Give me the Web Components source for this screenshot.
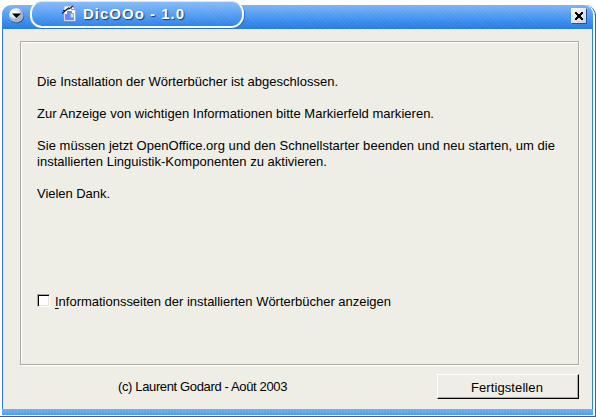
<!DOCTYPE html>
<html lang="de">
<head>
<meta charset="utf-8">
<title>DicOOo - 1.0</title>
<style>
html,body{margin:0;width:596px;height:417px;overflow:hidden;background:#fff}
body{font:13px/16px "Liberation Sans",Arial,sans-serif;color:#000}
</style>
</head>
<body>
<dialog-window>
  <title-bar slot="title"><fit-text span="102">DicOOo - 1.0</fit-text></title-bar>
  <group-frame>
    <fit-text span="301">Die Installation der Wörterbücher ist abgeschlossen.</fit-text>
    <fit-text span="397" class="gap">Zur Anzeige von wichtigen Informationen bitte Markierfeld markieren.</fit-text>
    <fit-text span="518" class="gap">Sie müssen jetzt OpenOffice.org und den Schnellstarter beenden und neu starten, um die</fit-text>
    <fit-text span="290">installierten Linguistik-Komponenten zu aktivieren.</fit-text>
    <fit-text span="73" class="gap">Vielen Dank.</fit-text>
    <check-field slot="option"><fit-text span="336"><u>I</u>nformationsseiten der installierten Wörterbücher anzeigen</fit-text></check-field>
  </group-frame>
  <fit-text slot="footer" span="169">(c) Laurent Godard - Août 2003</fit-text>
  <push-button slot="footer"><fit-text span="72">Fertigstellen</fit-text></push-button>
</dialog-window>
<script>
function define(name, html, ready) {
  customElements.define(name, class extends HTMLElement {
    constructor() {
      super();
      const t = document.createElement('template');
      t.innerHTML = html;
      this.attachShadow({mode: 'open'}).append(t.content.cloneNode(true));
    }
    connectedCallback() { if (ready) ready(this); }
  });
}

define('dialog-window', `
<style>
:host{display:grid;grid-template-rows:29px 1fr 6px;box-sizing:border-box;width:596px;height:417px;padding:0 3px 2px 2px;
 background:linear-gradient(#2366b2,#2366b2) 0 416px/596px 1px no-repeat,linear-gradient(#2366b2,#2366b2) 595px 14px/1px 403px no-repeat,#fff}
main{background:#eeeee6;border-left:1px solid #2a78cf;border-right:1px solid #3380dc;padding:12px 13px 0 17px;display:flex;flex-direction:column}
footer{display:flex;justify-content:space-between;padding:9px 0 0 98px}
footer ::slotted(fit-text){margin-top:5px}
.bottom{background:repeating-linear-gradient(90deg,#ffffff12 0 1px,transparent 1px 3px),linear-gradient(#6baef8,#5ca4f4 60%,#4a98f0)}
</style>
<slot name="title"></slot>
<main><slot></slot><footer><slot name="footer"></slot></footer></main>
<div class="bottom"></div>`);

define('title-bar', `
<style>
:host{display:block;position:relative;height:29px;color:#fff;font-size:15px;font-weight:bold;line-height:18px;text-shadow:1px 1px 1px #123c78}
.bar{position:absolute;inset:5px 0 0;border-radius:9px 9px 0 0;
 background:repeating-linear-gradient(45deg,#ffffff0c 0 1px,transparent 1px 3px),linear-gradient(#7cb4f8,#3288ec 75%,#2b7bd9)}
.edge{position:absolute;right:-3px;top:5px;width:12px;height:14px;box-sizing:border-box;border-right:1px solid #2366b2;border-radius:0 11px 0 0}
.tab{position:absolute;left:28px;top:1px;width:214px;height:27px;box-sizing:border-box;border:2px solid #fff;border-top:1px solid #d4e6ff;border-radius:12px 12px 13px 12px;
 background:repeating-linear-gradient(45deg,#ffffff0c 0 1px,transparent 1px 3px),linear-gradient(#86bbfb,#62a5f5 40%,#2d82e8);box-shadow:1px 1px 0 #2a70c4;display:flex;padding:2px 0 0 28px}
.doc{width:16px;height:17px;margin:1px 6px 0 1px;flex:none}
.tab ::slotted(*){margin-top:1px}
.menu{position:absolute;left:6px;top:7px}
.close{position:absolute;right:6px;top:8px}
</style>
<div class="bar"></div><div class="edge"></div>
<div class="tab">
 <svg class="doc" viewBox="0 0 16 17"><path d="M3 1h8l3.500 3.500v11.500H3z" fill="#fff" stroke="#8aa6cf" stroke-width=".8"/><path d="M10.500 1.500v3H14" fill="none" stroke="#88a"/><path d="M4 9h2V6h5v3h2v6H4z" fill="#807ff5"/><rect x="9.500" y="8.500" width="3" height="4" fill="#c8eefa" stroke="#50c9e8"/><path d="M1 8.500l3-2.500 2-2 2 0 4-3M2 5.500l3 0 3-3" fill="none" stroke="#172741" stroke-width="1.2"/></svg>
 <slot></slot>
</div>
<svg class="menu" width="17" height="17" viewBox="0 0 17 17"><defs><radialGradient id="g" cx=".35" cy=".3"><stop offset="0" stop-color="#fff"/><stop offset=".65" stop-color="#e5e8f1"/><stop offset="1" stop-color="#a9b2c9"/></radialGradient></defs><circle cx="9" cy="9.2" r="7.3" fill="#275da7"/><circle cx="8.3" cy="8.2" r="7.3" fill="url(#g)"/><path d="M4 6.500h9L8.500 11z"/></svg>
<svg class="close" width="16" height="16" viewBox="0 0 16 16"><defs><linearGradient id="h" x2="1" y2="1"><stop stop-color="#fff"/><stop offset="1" stop-color="#c8cfdf"/></linearGradient></defs><path d="M1 1h15v15H1z" fill="#1f579f"/><path d="M0 0h15v15H0z" fill="url(#h)"/><path d="M4 4h2v1h1v1h2V5h1V4h2v2h-1v1h-1v2h1v1h1v2h-2v-1H9v-1H7v1H6v1H4v-2h1V9h1V7H5V6H4z"/></svg>`);

define('group-frame', `
<style>
:host{display:flex;flex-direction:column;box-sizing:border-box;width:559px;height:324px;padding:32px 0 0 16px;border:1px solid #aaaaa2;box-shadow:1px 1px 0 #fff,inset 1px 1px 0 #fff}
::slotted(.gap){margin-top:16px}
.option{margin-top:92px}
</style>
<slot></slot><div class="option"><slot name="option"></slot></div>`);

define('check-field', `
<style>
:host{display:flex}
i{box-sizing:border-box;width:13px;height:13px;margin:0 5px 0 0;background:#fff;border:1px solid;border-color:#a8a8a0 #fff #fff #a8a8a0;box-shadow:inset 1px 1px 0 #000,inset -1px -1px 0 #e2e2da}
</style><i></i><slot></slot>`);

define('push-button', `
<style>
:host{display:flex;justify-content:center;box-sizing:border-box;width:142px;height:25px;padding:5px 2px 0 0;background:#eeeee6;border:1px solid;border-color:#fff #000 #000 #fff;box-shadow:inset -1px -1px 0 #aaaaa2}
</style><slot></slot>`);

/* Spreads a single line of text over the width given in its span attribute. */
define('fit-text', `
<style>
:host{display:block;white-space:nowrap;height:16px}
span{display:inline-block}
::slotted(u){text-underline-offset:2px;text-decoration-thickness:1px}
</style><span><slot></slot></span>`, el => {
  const s = el.shadowRoot.querySelector('span');
  const w = s.getBoundingClientRect().width;
  s.style.letterSpacing = (el.getAttribute('span') - w) / el.textContent.length + 'px';
});
</script>
</body>
</html>
